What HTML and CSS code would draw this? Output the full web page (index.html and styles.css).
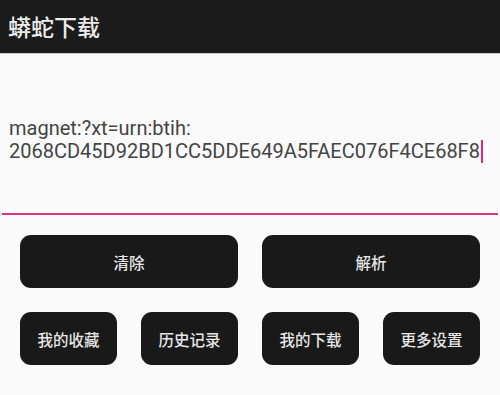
FILE: index.html
```html
<!DOCTYPE html>
<html lang="zh-CN">
<head>
<meta charset="utf-8">
<title>蟒蛇下载</title>
<link rel="stylesheet" href="styles.css">
</head>
<body>
<div class="app">
  <header class="toolbar">
    <h1 class="title">蟒蛇下载</h1>
  </header>
  <main class="content">
    <div class="field">
      <div class="field-text">magnet:?xt=urn:btih:<br>2068CD45D92BD1CC5DDE649A5FAEC076F4CE68F8<span class="cursor"></span></div>
      <div class="underline"></div>
    </div>
    <div class="row row-2">
      <button class="btn">清除</button>
      <button class="btn">解析</button>
    </div>
    <div class="row row-4">
      <button class="btn">我的收藏</button>
      <button class="btn">历史记录</button>
      <button class="btn">我的下载</button>
      <button class="btn">更多设置</button>
    </div>
  </main>
</div>
</body>
</html>
```
FILE: styles.css
```css
* { box-sizing: border-box; }
html, body {
  margin: 0;
  padding: 0;
  width: 500px;
  height: 395px;
  overflow: hidden;
  background: #fafafa;
  font-family: Roboto, "Noto Sans CJK SC", sans-serif;
}
.app {
  display: flex;
  flex-direction: column;
  height: 395px;
}
.toolbar {
  height: 54px;
  background: #1b1b1b;
  display: flex;
  align-items: center;
  padding-left: 8px;
  border-bottom: 1px solid #c8c8c8;
}
.title {
  margin: 0;
  font-family: "Noto Sans CJK SC", sans-serif;
  font-size: 23px;
  font-weight: 500;
  color: #ececec;
  line-height: 1;
}
.content {
  display: flex;
  flex-direction: column;
}
.field {
  padding-top: 63px;
}
.field-text {
  padding-left: 9px;
  font-size: 20px;
  line-height: 23px;
  color: #444444;
  white-space: nowrap;
}
.cursor {
  display: inline-block;
  width: 2px;
  height: 23px;
  background: #e4267a;
  vertical-align: -5px;
  margin-left: 1px;
}
.underline {
  margin: 50px 2px 0 2px;
  height: 2px;
  background: #e0337c;
}
.row {
  display: grid;
  gap: 24px;
  padding: 0 20px;
}
.row-2 {
  grid-template-columns: 1fr 1fr;
  margin-top: 20px;
}
.row-4 {
  grid-template-columns: repeat(4, 1fr);
  margin-top: 24px;
}
.btn {
  height: 53px;
  border: none;
  border-radius: 11px;
  background: #191919;
  color: #e6e6e6;
  font-family: "Noto Sans CJK SC", sans-serif;
  font-size: 15.5px;
  font-weight: 500;
  padding: 0;
  display: flex;
  align-items: center;
  justify-content: center;
}
```
